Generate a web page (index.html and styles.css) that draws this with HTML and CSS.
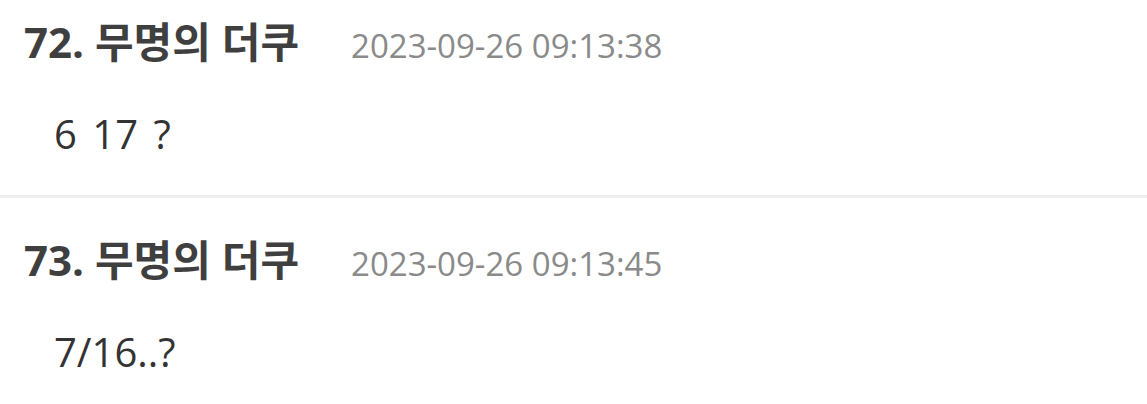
FILE: index.html
```html
<!DOCTYPE html>
<html lang="ko">
<head>
    <meta charset="UTF-8">
    <title>댓글</title>
    <link rel="stylesheet" href="styles.css">
</head>
<body>
    <ul class="comment-list">
        <li class="comment">
            <div class="comment-head">
                <span class="comment-name">72. 무명의 더쿠</span>
                <span class="comment-date">2023-09-26 09:13:38</span>
            </div>
            <div class="comment-body">6 17 ?</div>
        </li>
        <li class="comment">
            <div class="comment-head">
                <span class="comment-name">73. 무명의 더쿠</span>
                <span class="comment-date">2023-09-26 09:13:45</span>
            </div>
            <div class="comment-body">7/16..?</div>
        </li>
    </ul>
</body>
</html>
```

FILE: styles.css
```css
body {
    margin: 0;
    background: #ffffff;
    font-family: "Open Sans", "Noto Sans CJK KR", sans-serif;
    color: #333;
}
.comment-list {
    list-style: none;
    margin: -20px 0 0 0;
    padding: 0;
}
.comment {
    padding: 38px 24px 37px 24px;
    border-bottom: 3px solid #eeeeee;
}
.comment-head {
    display: flex;
    align-items: baseline;
    gap: 52px;
    height: 48px;
    line-height: 48px;
}
.comment-name {
    font-size: 42px;
    font-weight: bold;
    color: #3f3f3f;
}
.comment-date {
    font-size: 33px;
    color: #8a8a8a;
}
.comment-body {
    margin-top: 44px;
    padding-left: 30px;
    font-size: 40px;
    line-height: 48px;
    word-spacing: 5px;
    color: #333;
}
```
